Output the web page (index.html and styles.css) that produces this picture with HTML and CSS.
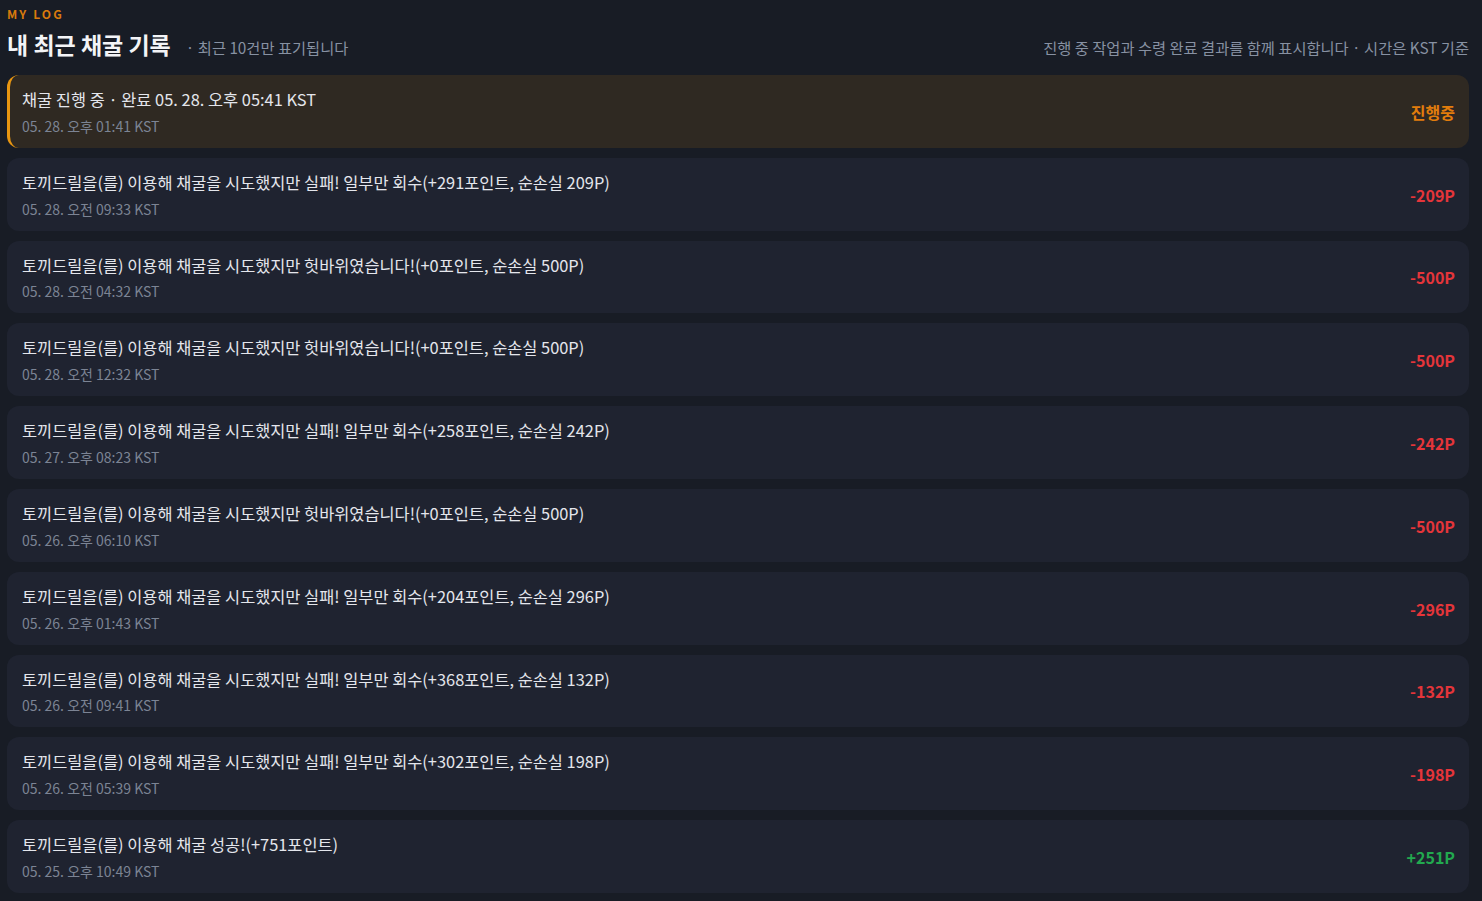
FILE: index.html
```html
<html>
<head>
<meta charset="utf-8">
<link rel="stylesheet" href="styles.css">
</head>
<body>
<div class="page">
	<div class="eyebrow">MY LOG</div>
	<div class="head">
		<div class="head_left">
			<h1>내 최근 채굴 기록</h1>
			<span class="sub">· 최근 10건만 표기됩니다</span>
		</div>
		<div class="head_right">진행 중 작업과 수령 완료 결과를 함께 표시합니다 · 시간은 KST 기준</div>
	</div>

	<div class="log">
		<div class="item running">
			<div class="info">
				<div class="title">채굴 진행 중 · 완료 05. 28. 오후 05:41 KST</div>
				<div class="date">05. 28. 오후 01:41 KST</div>
			</div>
			<div class="value wait">진행중</div>
		</div>
		<div class="item">
			<div class="info">
				<div class="title">토끼드릴을(를) 이용해 채굴을 시도했지만 실패! 일부만 회수(+291포인트, 순손실 209P)</div>
				<div class="date">05. 28. 오전 09:33 KST</div>
			</div>
			<div class="value minus">-209P</div>
		</div>
		<div class="item">
			<div class="info">
				<div class="title">토끼드릴을(를) 이용해 채굴을 시도했지만 헛바위였습니다!(+0포인트, 순손실 500P)</div>
				<div class="date">05. 28. 오전 04:32 KST</div>
			</div>
			<div class="value minus">-500P</div>
		</div>
		<div class="item">
			<div class="info">
				<div class="title">토끼드릴을(를) 이용해 채굴을 시도했지만 헛바위였습니다!(+0포인트, 순손실 500P)</div>
				<div class="date">05. 28. 오전 12:32 KST</div>
			</div>
			<div class="value minus">-500P</div>
		</div>
		<div class="item">
			<div class="info">
				<div class="title">토끼드릴을(를) 이용해 채굴을 시도했지만 실패! 일부만 회수(+258포인트, 순손실 242P)</div>
				<div class="date">05. 27. 오후 08:23 KST</div>
			</div>
			<div class="value minus">-242P</div>
		</div>
		<div class="item">
			<div class="info">
				<div class="title">토끼드릴을(를) 이용해 채굴을 시도했지만 헛바위였습니다!(+0포인트, 순손실 500P)</div>
				<div class="date">05. 26. 오후 06:10 KST</div>
			</div>
			<div class="value minus">-500P</div>
		</div>
		<div class="item">
			<div class="info">
				<div class="title">토끼드릴을(를) 이용해 채굴을 시도했지만 실패! 일부만 회수(+204포인트, 순손실 296P)</div>
				<div class="date">05. 26. 오후 01:43 KST</div>
			</div>
			<div class="value minus">-296P</div>
		</div>
		<div class="item">
			<div class="info">
				<div class="title">토끼드릴을(를) 이용해 채굴을 시도했지만 실패! 일부만 회수(+368포인트, 순손실 132P)</div>
				<div class="date">05. 26. 오전 09:41 KST</div>
			</div>
			<div class="value minus">-132P</div>
		</div>
		<div class="item">
			<div class="info">
				<div class="title">토끼드릴을(를) 이용해 채굴을 시도했지만 실패! 일부만 회수(+302포인트, 순손실 198P)</div>
				<div class="date">05. 26. 오전 05:39 KST</div>
			</div>
			<div class="value minus">-198P</div>
		</div>
		<div class="item">
			<div class="info">
				<div class="title">토끼드릴을(를) 이용해 채굴 성공!(+751포인트)</div>
				<div class="date">05. 25. 오후 10:49 KST</div>
			</div>
			<div class="value plus">+251P</div>
		</div>
	</div>
</div>
</body>
</html>
```

FILE: styles.css
```css
body {
	margin: 0;
	background-color: #181c25;
	color: #e6e8ee;
	font-family: "Noto Sans CJK KR", "Noto Sans", sans-serif;
}
.page {
	padding: 6px 13px 20px 7px;
}

.eyebrow {
	color: #d97a0c;
	font-size: 12px;
	line-height: 16px;
	font-weight: bold;
	letter-spacing: 2.1px;
}
.head {
	display: flex;
	justify-content: space-between;
	align-items: baseline;
	margin-top: 7px;
	margin-bottom: 16px;
}
.head_left {
	display: flex;
	align-items: baseline;
	gap: 15px;
}
h1 {
	margin: 0;
	font-size: 23px;
	line-height: 30px;
	font-weight: bold;
	color: #f3f4f7;
}
.sub, .head_right {
	font-size: 15.3px;
	color: #8791a2;
}

.log {
	display: flex;
	flex-direction: column;
	gap: 10px;
}
.item {
	display: flex;
	align-items: center;
	justify-content: space-between;
	background-color: #1f2330;
	border-radius: 12px;
	padding: 13px 14px 12px 15px;
}
.item.running {
	background-color: #2f2922;
	border-left: 3px solid #e89611;
	padding-left: 12px;
}
.title {
	font-size: 16.4px;
	line-height: 23.8px;
	color: #e4e6ec;
}
.date {
	margin-top: 4px;
	font-size: 14px;
	line-height: 20px;
	color: #7c8494;
}
.value {
	font-size: 16px;
	font-weight: bold;
}
.wait {
	color: #e27d0c;
}
.minus {
	color: #e5353a;
}
.plus {
	color: #22a94f;
}
```
